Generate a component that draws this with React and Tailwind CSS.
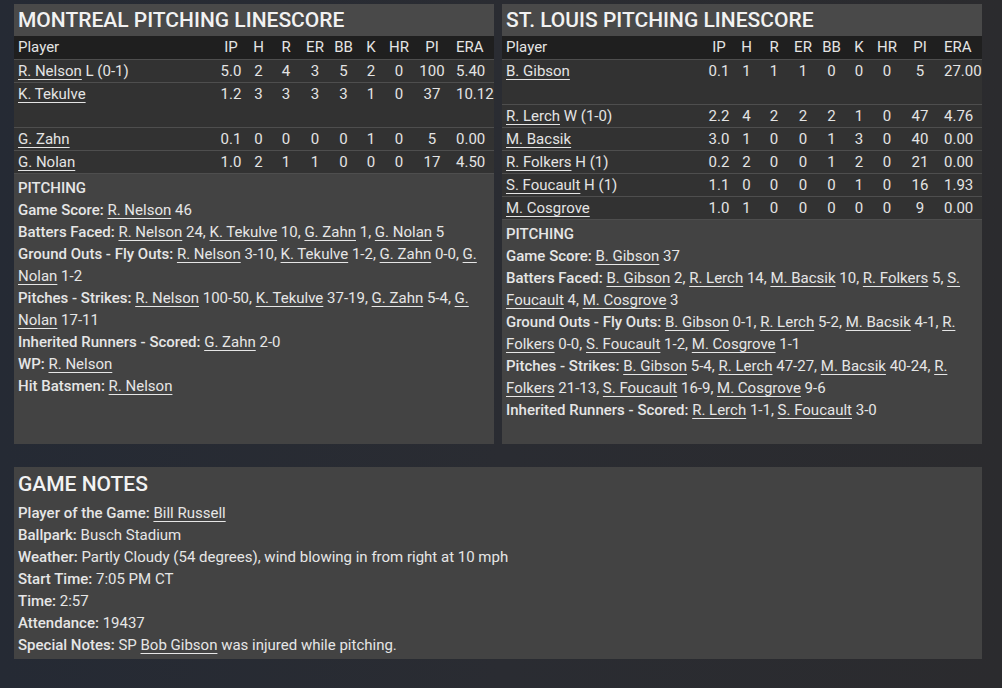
import React from "react";

const cols =
  "grid grid-cols-[1fr_28px_27px_28px_30px_27px_28px_28px_38px_43px]";

const montreal = [
  { name: "R. Nelson", note: " L (0-1)", s: ["5.0", "2", "4", "3", "5", "2", "0", "100", "5.40"] },
  { name: "K. Tekulve", s: ["1.2", "3", "3", "3", "3", "1", "0", "37", "10.12"], tall: true },
  { name: "G. Zahn", s: ["0.1", "0", "0", "0", "0", "1", "0", "5", "0.00"] },
  { name: "G. Nolan", s: ["1.0", "2", "1", "1", "0", "0", "0", "17", "4.50"] },
];

const stlouis = [
  { name: "B. Gibson", s: ["0.1", "1", "1", "1", "0", "0", "0", "5", "27.00"], tall: true },
  { name: "R. Lerch", note: " W (1-0)", s: ["2.2", "4", "2", "2", "2", "1", "0", "47", "4.76"] },
  { name: "M. Bacsik", s: ["3.0", "1", "0", "0", "1", "3", "0", "40", "0.00"] },
  { name: "R. Folkers", note: " H (1)", s: ["0.2", "2", "0", "0", "1", "2", "0", "21", "0.00"] },
  { name: "S. Foucault", note: " H (1)", s: ["1.1", "0", "0", "0", "0", "1", "0", "16", "1.93"] },
  { name: "M. Cosgrove", s: ["1.0", "1", "0", "0", "0", "0", "0", "9", "0.00"] },
];

const L = ({ children }) => (
  <a className="underline underline-offset-[3px] decoration-1 cursor-pointer">{children}</a>
);

const B = ({ children }) => <span className="font-medium">{children}</span>;

const Linescore = ({ title, rows, children }) => (
  <div className="flex flex-col bg-[#434343]">
    <div className="h-[32px] bg-[#494949] pl-[4px] flex items-center text-[21px] font-medium text-[#f2f2f2] leading-none">
      {title}
    </div>
    <div className={`${cols} h-[23px] bg-[#1f1f1f] items-center text-[15px] text-[#e4e4e4]`}>
      <div className="pl-[4px]">Player</div>
      {["IP", "H", "R", "ER", "BB", "K", "HR", "PI"].map((h) => (
        <div key={h} className="text-center">
          {h}
        </div>
      ))}
      <div className="pl-[5px]">ERA</div>
    </div>
    {rows.map((r) => (
      <div
        key={r.name}
        className={`${cols} ${r.tall ? "h-[45px]" : "h-[23px]"} bg-[#323232] border-t border-[#4e4e4e] text-[15px] text-[#e4e4e4] leading-[22px]`}
      >
        <div className="pl-[4px] whitespace-nowrap">
          <L>{r.name}</L>
          {r.note}
        </div>
        {r.s.slice(0, 8).map((v, i) => (
          <div key={i} className="text-center">
            {v}
          </div>
        ))}
        <div className="pl-[5px] whitespace-nowrap">{r.s[8]}</div>
      </div>
    ))}
    <div className="flex-1 border-t border-[#4e4e4e] px-[4px] pt-[3px] text-[15px] leading-[22px] text-[#e6e6e6]">
      {children}
    </div>
  </div>
);

export default function App() {
  return (
    <div
      className="w-full h-[688px] overflow-hidden bg-gradient-to-r from-[#252a34] via-[#2a2c32] to-[#2b2b2e] pl-[14px] pr-[20px] pt-[4px]"
      style={{ fontFamily: "Roboto, 'Liberation Sans', sans-serif" }}
    >
      <div className="grid grid-cols-2 gap-x-[8px] h-[440px]">
        <Linescore title="MONTREAL PITCHING LINESCORE" rows={montreal}>
          <div className="font-medium">PITCHING</div>
          <div>
            <B>Game Score:</B> <L>R. Nelson</L> 46
          </div>
          <div>
            <B>Batters Faced:</B> <L>R. Nelson</L> 24, <L>K. Tekulve</L> 10, <L>G. Zahn</L> 1,{" "}
            <L>G. Nolan</L> 5
          </div>
          <div>
            <B>Ground Outs - Fly Outs:</B> <L>R. Nelson</L> 3-10, <L>K. Tekulve</L> 1-2,{" "}
            <L>G. Zahn</L> 0-0, <L>G. Nolan</L> 1-2
          </div>
          <div>
            <B>Pitches - Strikes:</B> <L>R. Nelson</L> 100-50, <L>K. Tekulve</L> 37-19,{" "}
            <L>G. Zahn</L> 5-4, <L>G. Nolan</L> 17-11
          </div>
          <div>
            <B>Inherited Runners - Scored:</B> <L>G. Zahn</L> 2-0
          </div>
          <div>
            <B>WP:</B> <L>R. Nelson</L>
          </div>
          <div>
            <B>Hit Batsmen:</B> <L>R. Nelson</L>
          </div>
        </Linescore>
        <Linescore title="ST. LOUIS PITCHING LINESCORE" rows={stlouis}>
          <div className="font-medium">PITCHING</div>
          <div>
            <B>Game Score:</B> <L>B. Gibson</L> 37
          </div>
          <div>
            <B>Batters Faced:</B> <L>B. Gibson</L> 2, <L>R. Lerch</L> 14, <L>M. Bacsik</L> 10,{" "}
            <L>R. Folkers</L> 5, <L>S. Foucault</L> 4, <L>M. Cosgrove</L> 3
          </div>
          <div>
            <B>Ground Outs - Fly Outs:</B> <L>B. Gibson</L> 0-1, <L>R. Lerch</L> 5-2,{" "}
            <L>M. Bacsik</L> 4-1, <L>R. Folkers</L> 0-0, <L>S. Foucault</L> 1-2,{" "}
            <L>M. Cosgrove</L> 1-1
          </div>
          <div>
            <B>Pitches - Strikes:</B> <L>B. Gibson</L> 5-4, <L>R. Lerch</L> 47-27,{" "}
            <L>M. Bacsik</L> 40-24, <L>R. Folkers</L> 21-13, <L>S. Foucault</L> 16-9,{" "}
            <L>M. Cosgrove</L> 9-6
          </div>
          <div>
            <B>Inherited Runners - Scored:</B> <L>R. Lerch</L> 1-1, <L>S. Foucault</L> 3-0
          </div>
        </Linescore>
      </div>

      <div className="mt-[23px] h-[192px] bg-[#434343] px-[4px] pt-[1px] text-[15px] leading-[22px] text-[#e6e6e6]">
        <div className="h-[32px] flex items-center text-[21px] font-medium text-[#f2f2f2] leading-none">
          GAME NOTES
        </div>
        <div className="mt-[2px]">
          <div>
            <B>Player of the Game:</B> <L>Bill Russell</L>
          </div>
          <div>
            <B>Ballpark:</B> Busch Stadium
          </div>
          <div>
            <B>Weather:</B> Partly Cloudy (54 degrees), wind blowing in from right at 10 mph
          </div>
          <div>
            <B>Start Time:</B> 7:05 PM CT
          </div>
          <div>
            <B>Time:</B> 2:57
          </div>
          <div>
            <B>Attendance:</B> 19437
          </div>
          <div>
            <B>Special Notes:</B> SP <L>Bob Gibson</L> was injured while pitching.
          </div>
        </div>
      </div>
    </div>
  );
}
